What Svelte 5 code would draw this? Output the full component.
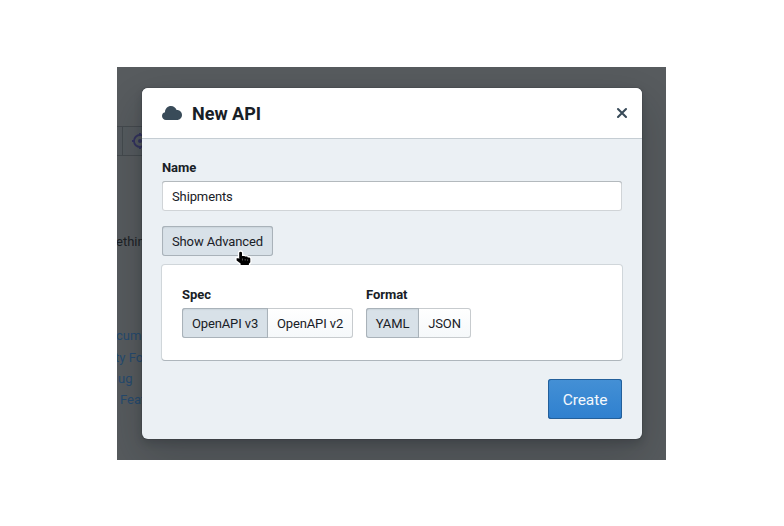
<script>
  let name = $state('Shipments');
  const groups = [
    { label: 'Spec', options: [{ text: 'OpenAPI v3', width: 86 }, { text: 'OpenAPI v2', width: 86 }] },
    { label: 'Format', options: [{ text: 'YAML', width: 53 }, { text: 'JSON', width: 53 }] }
  ];
</script>

<main>
  <div class="scene">
    <div class="behind">
      <div class="toolbar"><span></span></div>
      <svg class="target" width="18" height="18" viewBox="0 0 18 18">
        <circle cx="9" cy="9" r="6" fill="none" stroke="#33335f" stroke-width="1.8" />
        <circle cx="9" cy="9" r="2" fill="#33335f" />
        <path d="M9 1v3M9 14v3M1 9h3M14 9h3" stroke="#33335f" stroke-width="2" />
      </svg>
      <span class="frag dark" style="top:167px;left:-1px">ethin</span>
      <span class="frag" style="top:261px;left:-1px">cume</span>
      <span class="frag" style="top:283px;left:-2px">ty Fo</span>
      <span class="frag" style="top:304px;left:1px">ug</span>
      <span class="frag" style="top:325px;left:3px">Feat</span>
    </div>

    <section class="dialog">
      <header>
        <svg class="cloud" width="20" height="20" viewBox="0 0 20 20">
          <path fill="#394b59" d="M15 7c-.12 0-.24.03-.36.04C13.83 4.69 11.62 3 9 3 5.69 3 3 5.69 3 9c0 .05.01.09.01.14A3.98 3.98 0 0 0 0 13c0 2.21 1.79 4 4 4h11c2.76 0 5-2.24 5-5s-2.24-5-5-5z" />
        </svg>
        <h1>New API</h1>
        <svg class="close" width="20" height="20" viewBox="0 0 20 20">
          <path d="M6 6l8 8M14 6l-8 8" stroke="#394b59" stroke-width="2.1" stroke-linecap="round" />
        </svg>
      </header>

      <div class="body">
        <label for="name">Name</label>
        <input id="name" bind:value={name} />
        <button class="btn active advanced">Show Advanced
          <svg class="pointer" width="18" height="19" viewBox="0 0 18 19">
            <path d="M4.2 2.5Q5.6 .8 7 2.5V6h2.5l.5.6h2.2l.6.8h1.7l.8 1.2v3.6l-1.4 1.6v1.2H5.6v-1.6L1.6 10.4V8.2h1.9l.7.8z" fill="#fff" stroke="#fff" stroke-width="2.6" stroke-linejoin="round" />
            <path d="M4.2 2.5Q5.6 .8 7 2.5V6h2.5l.5.6h2.2l.6.8h1.7l.8 1.2v3.6l-1.4 1.6v1.2H5.6v-1.6L1.6 10.4V8.2h1.9l.7.8z" fill="#000" />
            <path d="M7.5 8.5v2M10.2 9v1.6M12.6 9.4v1.4" stroke="#777" stroke-width=".7" />
          </svg>
        </button>

        <div class="card">
          {#each groups as g}
            <div class="field">
              <b>{g.label}</b>
              <div class="group">
                {#each g.options as o, i}
                  <button class="btn" class:active={i === 0} style="width:{o.width}px">{o.text}</button>
                {/each}
              </div>
            </div>
          {/each}
        </div>

        <button class="create">Create</button>
      </div>
    </section>
  </div>
</main>

<style>
  :global(body) { background: #fff; }
  * { box-sizing: border-box; }
  main { padding: 67px 118px 66px 117px; font: 13px/18px Roboto, sans-serif; color: #182026; }
  .scene { position: relative; width: 549px; height: 393px; padding: 21px 25px; background: #585c5f; overflow: hidden; }
  .behind { position: absolute; inset: 0; }
  .toolbar { position: absolute; top: 59px; left: 0; width: 30px; height: 30px; background: #565b5f; border: solid #454a4e; border-width: 1px 0; }
  .toolbar span { display: block; width: 6px; height: 28px; border-right: 1px solid #454a4e; }
  .target { position: absolute; left: 14px; top: 65px; }
  .frag { position: absolute; color: #264b70; white-space: nowrap; line-height: 16px; }
  .frag.dark { color: #1c2125; }
  .dialog { position: relative; width: 500px; height: 351px; border-radius: 6px; background: #ebf0f4; box-shadow: 0 0 0 1px rgba(16,22,26,.1), 0 4px 8px rgba(16,22,26,.2), 0 18px 46px 6px rgba(16,22,26,.2); }
  header { display: flex; align-items: center; height: 50px; padding: 0 10px 0 20px; background: #fff; border-radius: 6px 6px 0 0; box-shadow: 0 1px 0 #c5cdd3; }
  h1 { flex: 1; margin: 0 0 0 10px; font-size: 18px; line-height: 22px; font-weight: 700; padding-top: 1px; }
  .body { display: flex; flex-direction: column; align-items: flex-start; padding: 21px 20px 20px; }
  label, b { font-weight: 700; line-height: 18px; letter-spacing: -.05px; }
  input { width: 460px; height: 30px; margin: 4px 0 15px; padding: 0 10px; border: 0; border-radius: 3px; background: #fff; font: inherit; letter-spacing: -.12px; color: inherit; outline: none; box-shadow: inset 0 1px 0 #b3b9bd, inset 0 0 0 1px #d0d4d7; }
  .btn { display: block; height: 30px; padding: 2px 0 0; border: 0; border-radius: 3px; font: inherit; letter-spacing: -.12px; color: inherit; white-space: nowrap; background: linear-gradient(#fff, #f5f8fa); box-shadow: inset 0 0 0 1px #c7cbce, inset 0 -1px 0 rgba(16,22,26,.06); }
  .btn.active { background: #d8e1e8; box-shadow: inset 0 0 0 1px #a9b2b9, inset 0 1px 2px rgba(16,22,26,.18); }
  .advanced { position: relative; width: 111px; }
  .pointer { position: absolute; left: 73px; top: 24px; z-index: 2; overflow: visible; }
  .card { display: flex; gap: 13px; width: 460px; height: 95px; margin-top: 9px; padding: 21px 20px; background: #fff; border-radius: 3px; box-shadow: 0 1px 0 #aeb6bc, 0 0 0 1px #d0d6da; }
  .field { display: flex; flex-direction: column; gap: 4px; }
  .group { display: flex; }
  .group .btn:first-child { border-radius: 3px 0 0 3px; position: relative; z-index: 1; }
  .group .btn:last-child { border-radius: 0 3px 3px 0; margin-left: -1px; }
  .create { align-self: flex-end; width: 74px; height: 40px; margin-top: 19px; padding: 2px 0 0; border: 0; border-radius: 3px; color: #f3f8fc; font: 15.5px/20px Roboto, sans-serif; letter-spacing: -.1px; background: linear-gradient(#4490d5, #2f80cf); box-shadow: inset 0 0 0 1px #235f9a, inset 0 -1px 0 rgba(16,22,26,.2); }
</style>
